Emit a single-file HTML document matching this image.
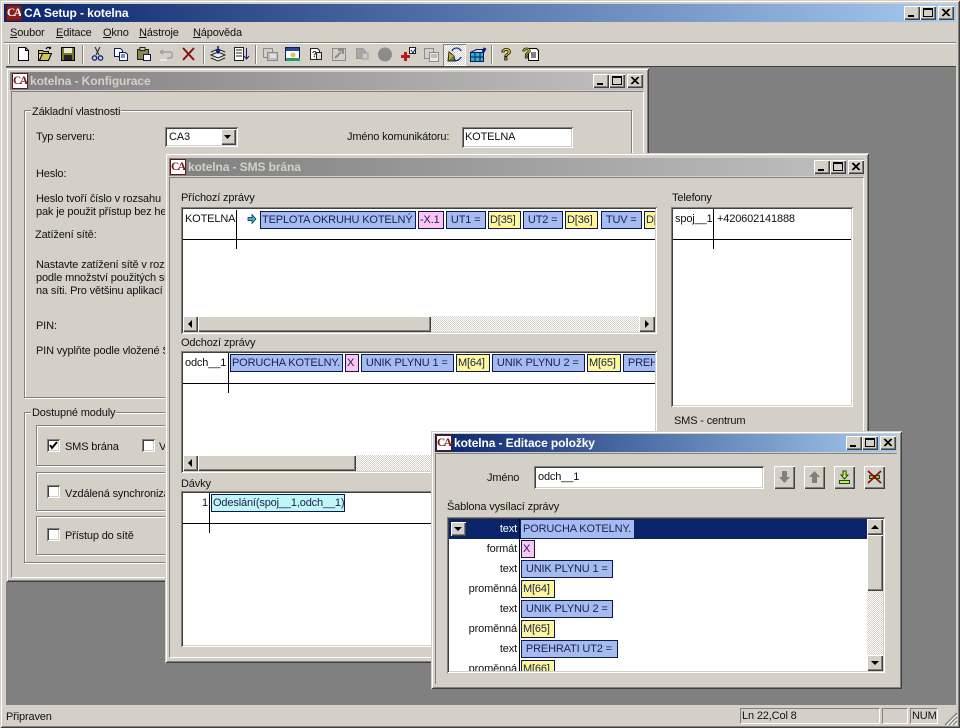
<!DOCTYPE html>
<html><head><meta charset="utf-8"><style>
html,body{margin:0;padding:0;width:960px;height:728px;overflow:hidden;background:#d4d0c8}
body{position:relative;font:11px/14px "Liberation Sans",sans-serif;letter-spacing:-.15px;color:#111}
div,span.t{position:absolute;box-sizing:border-box}
.t{white-space:nowrap;height:14px;margin-top:1px}
.win{background:#d4d0c8;box-shadow:inset 1px 1px 0 #d4d0c8,inset -1px -1px 0 #404040,inset 2px 2px 0 #fff,inset -2px -2px 0 #808080}
.in{border:1px solid;border-color:#808080 #fff #fff #808080}
.act{background:linear-gradient(90deg,#0a246a,#a6caf0)}
.ina{background:linear-gradient(90deg,#808080,#c0c0c0)}
.cap{font-weight:bold;font-size:12px;letter-spacing:-.1px;color:#d4d0c8;white-space:nowrap;height:14px}
.capa{color:#fff}
.r{background:#d4d0c8;box-shadow:inset 1px 1px 0 #fff,inset -1px -1px 0 #404040,inset -2px -2px 0 #808080}
.s{background:#fff;box-shadow:inset 1px 1px 0 #808080,inset -1px -1px 0 #fff,inset 2px 2px 0 #404040,inset -2px -2px 0 #d4d0c8}
.h{height:1px;background:#000}
.v{width:1px;background:#000}
.g{height:18px;border:1px solid #0a1a50;overflow:hidden;white-space:nowrap;line-height:17px;padding-left:1px;color:#1a2050}
.b{background:#a6bcf0}.p{background:#fbc4f4}.y{background:#fdf79a}.c{background:#c0f6f6}
.d{background:repeating-conic-gradient(#d4d0c8 0 25%,#fff 0 50%) 0 0/2px 2px}
.gb{border:1px solid #808080;box-shadow:1px 1px 0 #fff,inset 1px 1px 0 #fff}
.lb{background:#d4d0c8;padding:0 1px}
.ck{width:13px;height:13px;background:#fff;box-shadow:inset 1px 1px 0 #808080,inset -1px -1px 0 #fff,inset 2px 2px 0 #404040,inset -2px -2px 0 #d4d0c8}
svg{position:absolute;overflow:visible}
.ico{width:16px;height:16px;overflow:hidden;font:bold 11.5px/14px "Liberation Serif",serif;letter-spacing:-1.5px;text-align:left;padding-left:0;color:#7a1818;background:#fff;border:1px solid #5a1a1a}
.ico2{background:#8a1c1c;color:#fff}
</style></head><body>

<div class="win" style="left:0;top:0;width:960px;height:728px"></div>
<div class="act" style="left:4px;top:4px;width:952px;height:18px"></div>
<div class="ico ico2" style="left:6px;top:5px">CA</div>
<div class="cap capa" style="left:24px;top:6px">CA Setup - kotelna</div>

<div class="r" style="left:904px;top:6px;width:16px;height:14px"><div style="left:4px;top:9px;width:6px;height:2px;background:#000"></div></div>
<div class="r" style="left:920px;top:6px;width:16px;height:14px"><div style="left:3px;top:2px;width:10px;height:9px;border:1px solid #000;border-top-width:2px"></div></div>
<div class="r" style="left:938px;top:6px;width:16px;height:14px"><svg width="16" height="14"><path d="M4 3l7 7M5 3l7 7M11 3l-7 7M12 3l-7 7" stroke="#000" fill="none"/></svg></div>

<div class="t" style="left:10px;top:25px"><u>S</u>oubor</div>
<div class="t" style="left:56px;top:25px"><u>E</u>ditace</div>
<div class="t" style="left:103px;top:25px"><u>O</u>kno</div>
<div class="t" style="left:139px;top:25px"><u>N</u>ástroje</div>
<div class="t" style="left:193px;top:25px"><u>N</u>ápověda</div>

<div style="left:4px;top:42px;width:952px;height:1px;background:#808080"></div>
<div style="left:4px;top:43px;width:952px;height:1px;background:#fff"></div>
<div style="left:8px;top:45px;width:2px;height:19px;border-left:1px solid #fff;border-right:1px solid #808080"></div>

<div style="left:82px;top:45px;width:2px;height:19px;border-left:1px solid #808080;border-right:1px solid #fff"></div>
<div style="left:203px;top:45px;width:2px;height:19px;border-left:1px solid #808080;border-right:1px solid #fff"></div>
<div style="left:255px;top:45px;width:2px;height:19px;border-left:1px solid #808080;border-right:1px solid #fff"></div>
<div style="left:491px;top:45px;width:2px;height:19px;border-left:1px solid #808080;border-right:1px solid #fff"></div>
<div style="left:443px;top:44px;width:23px;height:22px;background:repeating-conic-gradient(#d4d0c8 0 25%,#fff 0 50%) 0 0/2px 2px;box-shadow:inset 1px 1px 0 #808080,inset -1px -1px 0 #fff"></div>

<svg style="left:0;top:0" width="960" height="66" fill="none" stroke-width="1">
 <path d="M18.500 47.500h7l3 3v10h-10z" fill="#fff" stroke="#000"/><path d="M25.500 47.500v3h3" stroke="#000"/>
 <path d="M38.500 50.500h4l1 1h5v2h-10zM38.500 53.500v7h10l3-7h-9l-3 7" fill="#cfc45a" stroke="#000"/><path d="M46 49c1-2 3-2 5-1l-1-1m1 1l-2 1" stroke="#000"/>
 <path d="M61.500 47.500h13v13h-13z" fill="#7a7a20" stroke="#000"/><rect x="64" y="48" width="8" height="5" fill="#e8e8d8"/><rect x="64" y="55" width="8" height="5" fill="#222"/>
 <path d="M95 47l4 8M100 47l-4 8" stroke="#222"/><circle cx="94.500" cy="58" r="2.200" stroke="#0a2a8a" stroke-width="1.300"/><circle cx="100.500" cy="58" r="2.200" stroke="#0a2a8a" stroke-width="1.300"/>
 <path d="M114.500 48.500h6l2 2v6h-8z" fill="#fff" stroke="#0a1a60"/><path d="M119.500 52.500h6l2 2v6h-8z" fill="#fff" stroke="#0a1a60"/><path d="M121 55h4M121 57h4" stroke="#0a1a60"/>
 <path d="M137.500 49.500h11v10h-11z" fill="#8a8a40" stroke="#222"/><rect x="140" y="47.500" width="5" height="3" fill="#ccc" stroke="#222"/><path d="M143.500 54.500h7v6h-7z" fill="#fff" stroke="#0a1a60"/>
 <path d="M160 52h10c3 0 3 6 0 6h-3M160 52l3-2M160 52l3 2" stroke="#a0a0a0" stroke-width="1.500"/><path d="M160 60h7" stroke="#fff"/>
 <path d="M183 48l11 12M194 48l-11 12" stroke="#8a1010" stroke-width="2"/>
 <path d="M211 55l7-3 7 3-7 3zM211 58l7 3 7-3M211 52l7-3 7 3" fill="#eee" stroke="#222"/><path d="M218 46v6M216 50l2 3 2-3" stroke="#0a1a80" stroke-width="1.500"/>
 <path d="M234.500 47.500h9v13h-9z" fill="#fff" stroke="#222"/><path d="M236 50h6M236 53h6M236 56h6" stroke="#222"/><path d="M246.500 48v11M244 56l2.500 3 2.500-3" stroke="#0a1a80"/>
 <path d="M263.500 48.500h9v9h-9z" fill="#d4d0c8" stroke="#8a8a8a"/><path d="M267.500 52.500h10v8h-10z" fill="#c0c0c0" stroke="#8a8a8a"/><path d="M270 55h6M270 57h6" stroke="#fff"/>
 <path d="M285.500 47.500h14v13h-14z" fill="#fff" stroke="#0a1a60"/><path d="M286 48h13v3h-13z" fill="#2a4aa0"/><path d="M286 58h14v3h-14z" fill="#2a9a6a"/><circle cx="293" cy="55" r="2.500" fill="#e8c060"/>
 <path d="M310.500 48.500h7l2 2v9h-9z" fill="#fff" stroke="#222"/><text x="312" y="57" font-family="Liberation Sans" font-size="8" font-weight="bold" fill="#222" stroke="none">?</text><path d="M316.500 52.500h5v7h-5z" fill="#ddd" stroke="#222"/>
 <path d="M332.500 48.500h13v12h-13z" fill="#d4d0c8" stroke="#8c8c8c"/><path d="M335 58l6-6M338 50h5v4" stroke="#8c8c8c" stroke-width="2"/>
 <path d="M356.500 48.500h6l3 3v7h-9z" fill="#a8a8a8" stroke="#999"/><path d="M362 53h6v6h-6z" fill="#ccc" stroke="#999"/>
 <circle cx="385" cy="54.500" r="7" fill="#8c8c8c"/>
 <path d="M400 57h3v-3h3v3h3v3h-3v3h-3v-3h-3z" fill="#c01818" transform="translate(1,-2)"/><path d="M409.500 47.500h6v6h-6z" fill="#fff" stroke="#222"/><path d="M411 50l2 3 3-5" stroke="#0a1a80"/>
 <path d="M424.500 48.500h9v10h-9z" fill="#d4d0c8" stroke="#8c8c8c"/><path d="M429.500 52.500h9v9h-9z" fill="#e8e8e8" stroke="#8c8c8c"/><path d="M431 55h6M431 57h6" stroke="#8c8c8c"/>
 <path d="M449 52l-1 9h7l-1-5z" fill="#3a8a3a" stroke="#222"/><path d="M449 53l5 3-5 4z" fill="#d0a030"/><path d="M452 51c2-4 7-4 9 0M461 57c-2 4-5 4-7 3" stroke="#0a2a9a" stroke-width="1.300"/>
 <path d="M470.500 52.500h13v9h-13z" fill="#30b0c0" stroke="#0a1a60"/><path d="M470.500 52.500l6-3h9l-2 3z" fill="#d8d8d8" stroke="#0a1a60"/><path d="M475 53v8M480 53v8M471 57h12" stroke="#0a1a60"/><path d="M483 52l2-4" stroke="#0a1a80" stroke-width="3"/>
 <path d="M528.500 48.500h8l2 2v10h-10z" fill="#fff" stroke="#000"/><path d="M531 53h5M531 55h5M531 57h5" stroke="#000"/>
</svg>
<div class="t" style="left:501px;top:44px;font:bold 17px/19px 'Liberation Sans';color:#e8d820;-webkit-text-stroke:.8px #000;height:19px">?</div>
<div class="t" style="left:522px;top:44px;font:bold 15px/17px 'Liberation Sans';color:#e8d820;-webkit-text-stroke:.7px #000;height:17px">?</div>

<div style="left:4px;top:66px;width:952px;height:639px;background:#808080;border-top:1px solid #404040"></div>
<div style="left:4px;top:66px;width:2px;height:639px;background:#d4d0c8"></div>

<div class="win" style="left:6px;top:68px;width:643px;height:514px"></div>
<div class="ina" style="left:10px;top:72px;width:634px;height:18px"></div>
<div class="ico" style="left:12px;top:73px">CA</div>
<div class="cap" style="left:30px;top:74px">kotelna - Konfigurace</div>
<div class="r" style="left:593px;top:74px;width:16px;height:14px"><div style="left:4px;top:9px;width:6px;height:2px;background:#000"></div></div>
<div class="r" style="left:609px;top:74px;width:16px;height:14px"><div style="left:3px;top:2px;width:10px;height:9px;border:1px solid #000;border-top-width:2px"></div></div>
<div class="r" style="left:627px;top:74px;width:16px;height:14px"><svg width="16" height="14"><path d="M4 3l7 7M5 3l7 7M11 3l-7 7M12 3l-7 7" stroke="#000" fill="none"/></svg></div>
<div class="in" style="left:11px;top:91px;width:633px;height:487px"></div>

<div class="gb" style="left:24px;top:110px;width:608px;height:288px"></div>
<div class="t lb" style="left:31px;top:104px">Základní vlastnosti</div>
<div class="t" style="left:36px;top:129px">Typ serveru:</div>
<div class="s" style="left:165px;top:127px;width:73px;height:20px"></div>
<div class="t" style="left:169px;top:129px">CA3</div>
<div class="r" style="left:221px;top:129px;width:15px;height:16px"><svg width="15" height="16"><path d="M3 6h7l-3.500 4z" fill="#000"/></svg></div>
<div class="t" style="left:347px;top:129px">Jméno komunikátoru:</div>
<div class="s" style="left:462px;top:127px;width:111px;height:21px"></div>
<div class="t" style="left:465px;top:129px">KOTELNA</div>
<div class="t" style="left:36px;top:166px">Heslo:</div>
<div class="t" style="left:36px;top:191px">Heslo tvoří číslo v rozsahu</div>
<div class="t" style="left:36px;top:204px">pak je použit přístup bez heslo</div>
<div class="t" style="left:35px;top:227px">Zatížení sítě:</div>
<div class="t" style="left:36px;top:257px">Nastavte zatížení sítě v rozsahu</div>
<div class="t" style="left:36px;top:270px">podle množství použitých signálů</div>
<div class="t" style="left:36px;top:283px">na síti. Pro většinu aplikací je</div>
<div class="t" style="left:36px;top:318px">PIN:</div>
<div class="t" style="left:36px;top:343px">PIN vyplňte podle vložené SIM</div>

<div class="gb" style="left:24px;top:412px;width:608px;height:151px"></div>
<div class="t lb" style="left:31px;top:405px">Dostupné moduly</div>
<div class="gb" style="left:36px;top:425px;width:400px;height:41px"></div>
<div class="gb" style="left:36px;top:472px;width:400px;height:39px"></div>
<div class="gb" style="left:36px;top:516px;width:400px;height:39px"></div>
<div class="ck" style="left:47px;top:439px"><svg width="13" height="13"><path d="M3 6l2 3 5-6" stroke="#000" stroke-width="2" fill="none"/></svg></div>
<div class="t" style="left:65px;top:439px">SMS brána</div>
<div class="ck" style="left:142px;top:439px"></div>
<div class="t" style="left:159px;top:439px">Vzdálený</div>
<div class="ck" style="left:47px;top:485px"></div>
<div class="t" style="left:65px;top:486px">Vzdálená synchronizace</div>
<div class="ck" style="left:47px;top:528px"></div>
<div class="t" style="left:65px;top:528px">Přístup do sítě</div>

<div class="win" style="left:165px;top:153px;width:704px;height:510px"></div>
<div class="ina" style="left:169px;top:158px;width:695px;height:18px"></div>
<div class="ico" style="left:170px;top:159px">CA</div>
<div class="cap" style="left:188px;top:160px">kotelna - SMS brána</div>
<div class="r" style="left:814px;top:160px;width:16px;height:14px"><div style="left:4px;top:9px;width:6px;height:2px;background:#000"></div></div>
<div class="r" style="left:830px;top:160px;width:16px;height:14px"><div style="left:3px;top:2px;width:10px;height:9px;border:1px solid #000;border-top-width:2px"></div></div>
<div class="r" style="left:848px;top:160px;width:16px;height:14px"><svg width="16" height="14"><path d="M4 3l7 7M5 3l7 7M11 3l-7 7M12 3l-7 7" stroke="#000" fill="none"/></svg></div>
<div class="in" style="left:169px;top:177px;width:695px;height:481px"></div>

<div class="t" style="left:181px;top:190px">Příchozí zprávy</div>
<div class="s" style="left:181px;top:207px;width:476px;height:127px"></div>
<div class="t" style="left:185px;top:211px">KOTELNA</div>
<div class="h" style="left:183px;top:239px;width:472px"></div>
<div class="v" style="left:236px;top:210px;height:39px"></div>
<svg style="left:247px;top:214px" width="10" height="10"><path d="M1 3.500h4v-3l4 4.500-4 4.500v-3h-4z" fill="#30c0b0" stroke="#0a1a60" stroke-width=".7"/></svg>
<div class="g b" style="left:260px;top:211px;width:156px">TEPLOTA OKRUHU KOTELNÝ</div>
<div class="g p" style="left:418px;top:211px;width:26px">-X.1</div>
<div class="g b" style="left:446px;top:211px;width:40px">&nbsp;UT1 =</div>
<div class="g y" style="left:488px;top:211px;width:33px">D[35]</div>
<div class="g b" style="left:523px;top:211px;width:40px">&nbsp;UT2 =</div>
<div class="g y" style="left:565px;top:211px;width:33px">D[36]</div>
<div class="g b" style="left:601px;top:211px;width:41px">&nbsp;TUV =</div>
<div class="g y" style="left:644px;top:211px;width:11px;border-right:0">D[37]</div>
<div class="d" style="left:183px;top:316px;width:472px;height:16px"></div>
<div class="r" style="left:183px;top:316px;width:15px;height:16px"><svg width="15" height="16"><path d="M9 4v8l-4-4z" fill="#000"/></svg></div>
<div class="r" style="left:198px;top:316px;width:233px;height:16px"></div>
<div class="r" style="left:639px;top:316px;width:16px;height:16px"><svg width="16" height="16"><path d="M6 4v8l4-4z" fill="#000"/></svg></div>

<div class="t" style="left:181px;top:335px">Odchozí zprávy</div>
<div class="s" style="left:181px;top:351px;width:476px;height:122px"></div>
<div class="t" style="left:185px;top:355px">odch__1</div>
<div class="h" style="left:183px;top:383px;width:472px"></div>
<div class="v" style="left:228px;top:353px;height:40px"></div>
<div class="g b" style="left:230px;top:354px;width:113px">PORUCHA KOTELNY.</div>
<div class="g p" style="left:345px;top:354px;width:14px">X</div>
<div class="g b" style="left:361px;top:354px;width:93px">&nbsp;UNIK PLYNU 1 =</div>
<div class="g y" style="left:456px;top:354px;width:34px">M[64]</div>
<div class="g b" style="left:492px;top:354px;width:93px">&nbsp;UNIK PLYNU 2 =</div>
<div class="g y" style="left:587px;top:354px;width:34px">M[65]</div>
<div class="g b" style="left:623px;top:354px;width:32px;border-right:0">&nbsp;PREHRATI</div>
<div class="d" style="left:183px;top:455px;width:472px;height:16px"></div>
<div class="r" style="left:183px;top:455px;width:15px;height:16px"><svg width="15" height="16"><path d="M9 4v8l-4-4z" fill="#000"/></svg></div>
<div class="r" style="left:198px;top:455px;width:158px;height:16px"></div>

<div class="t" style="left:181px;top:476px">Dávky</div>
<div class="s" style="left:181px;top:491px;width:476px;height:156px"></div>
<div class="t" style="left:202px;top:495px">1</div>
<div class="h" style="left:183px;top:523px;width:472px"></div>
<div class="v" style="left:209px;top:493px;height:40px"></div>
<div class="g c" style="left:211px;top:494px;width:134px">Odeslání(spoj__1,odch__1)</div>

<div class="t" style="left:672px;top:190px">Telefony</div>
<div class="s" style="left:671px;top:207px;width:182px;height:200px"></div>
<div class="t" style="left:675px;top:211px">spoj__1</div>
<div class="t" style="left:717px;top:211px">+420602141888</div>
<div class="h" style="left:673px;top:239px;width:178px"></div>
<div class="v" style="left:713px;top:209px;height:40px"></div>
<div class="t" style="left:674px;top:413px">SMS - centrum</div>

<div class="win" style="left:431px;top:431px;width:471px;height:258px"></div>
<div class="act" style="left:435px;top:434px;width:462px;height:18px"></div>
<div class="ico" style="left:436px;top:435px">CA</div>
<div class="cap capa" style="left:454px;top:436px">kotelna - Editace položky</div>
<div class="r" style="left:846px;top:436px;width:16px;height:14px"><div style="left:4px;top:9px;width:6px;height:2px;background:#000"></div></div>
<div class="r" style="left:862px;top:436px;width:16px;height:14px"><div style="left:3px;top:2px;width:10px;height:9px;border:1px solid #000;border-top-width:2px"></div></div>
<div class="r" style="left:880px;top:436px;width:16px;height:14px"><svg width="16" height="14"><path d="M4 3l7 7M5 3l7 7M11 3l-7 7M12 3l-7 7" stroke="#000" fill="none"/></svg></div>
<div style="left:435px;top:453px;width:462px;height:1px;background:#808080"></div>
<div style="left:435px;top:453px;width:1px;height:231px;background:#808080"></div>

<div class="t" style="left:487px;top:470px">Jméno</div>
<div class="s" style="left:534px;top:466px;width:230px;height:23px"></div>
<div class="t" style="left:538px;top:469px">odch__1</div>
<div class="r" style="left:774px;top:466px;width:21px;height:23px"><svg width="21" height="23"><path d="M8 5h5v6h3l-5.500 6-5.500-6h3z" fill="#808080"/></svg></div>
<div class="r" style="left:804px;top:466px;width:21px;height:23px"><svg width="21" height="23"><path d="M8 17h5v-6h3l-5.500-6-5.500 6h3z" fill="#808080"/></svg></div>
<div class="r" style="left:834px;top:466px;width:21px;height:23px"><svg width="21" height="23"><path d="M9 5h3v4h2l-3.500 4-3.500-4h2zM5.500 14.500h10v3h-10z" fill="#c8f040" stroke="#1a4a1a"/></svg></div>
<div class="r" style="left:864px;top:466px;width:21px;height:23px"><svg width="21" height="23"><path d="M5.500 9.500h10v3h-10z" fill="#a8c840" stroke="#1a4a1a"/><path d="M4 5l13 12M17 5l-13 12" stroke="#8a1010" stroke-width="1.800"/></svg></div>

<div class="t" style="left:447px;top:499px">Šablona vysílací zprávy</div>
<div class="s" style="left:447px;top:517px;width:438px;height:156px"></div>
<div style="left:449px;top:519px;width:418px;height:152px;overflow:hidden">
 <div style="left:0;top:0;width:418px;height:20px;background:#0a246a"></div>
 <div class="v" style="left:70px;top:0;height:152px"></div>
 <div class="r" style="left:2px;top:3px;width:15px;height:14px"><svg width="15" height="14"><path d="M3 5h8l-4 4z" fill="#000"/></svg></div>
 <div class="t" style="left:0;width:68px;text-align:right;top:2px;color:#fff">text</div>
 <div class="g b" style="left:72px;top:1px;width:113px;border-color:#a6bcf0">PORUCHA KOTELNY.</div>
 <div class="t" style="left:0;width:68px;text-align:right;top:22px">formát</div>
 <div class="g p" style="left:72px;top:21px;width:14px">X</div>
 <div class="t" style="left:0;width:68px;text-align:right;top:42px">text</div>
 <div class="g b" style="left:72px;top:41px;width:92px">&nbsp;UNIK PLYNU 1 =</div>
 <div class="t" style="left:0;width:68px;text-align:right;top:62px">proměnná</div>
 <div class="g y" style="left:72px;top:61px;width:34px">M[64]</div>
 <div class="t" style="left:0;width:68px;text-align:right;top:82px">text</div>
 <div class="g b" style="left:72px;top:81px;width:92px">&nbsp;UNIK PLYNU 2 =</div>
 <div class="t" style="left:0;width:68px;text-align:right;top:102px">proměnná</div>
 <div class="g y" style="left:72px;top:101px;width:34px">M[65]</div>
 <div class="t" style="left:0;width:68px;text-align:right;top:122px">text</div>
 <div class="g b" style="left:72px;top:121px;width:97px">&nbsp;PREHRATI UT2 =</div>
 <div class="t" style="left:0;width:68px;text-align:right;top:142px">proměnná</div>
 <div class="g y" style="left:72px;top:141px;width:34px">M[66]</div>
</div>
<div class="d" style="left:867px;top:519px;width:16px;height:152px"></div>
<div class="r" style="left:867px;top:519px;width:16px;height:16px"><svg width="16" height="16"><path d="M4 10h8l-4-4z" fill="#000"/></svg></div>
<div class="r" style="left:867px;top:535px;width:16px;height:56px"></div>
<div class="r" style="left:867px;top:655px;width:16px;height:16px"><svg width="16" height="16"><path d="M4 6h8l-4 4z" fill="#000"/></svg></div>

<div class="t" style="left:6px;top:709px">Připraven</div>
<div class="in" style="left:740px;top:708px;width:140px;height:16px"></div>
<div class="t" style="left:742px;top:708px">Ln 22,Col 8</div>
<div class="in" style="left:882px;top:708px;width:26px;height:16px"></div>
<div class="in" style="left:910px;top:708px;width:28px;height:16px"></div>
<div class="t" style="left:912px;top:708px">NUM</div>
<svg style="left:944px;top:712px" width="14" height="14"><path d="M13 1L1 13M13 5L5 13M13 9L9 13" stroke="#808080" stroke-width="1.300"/><path d="M13 3L3 13M13 7L7 13M13 11L11 13" stroke="#fff"/></svg>
</body></html>
